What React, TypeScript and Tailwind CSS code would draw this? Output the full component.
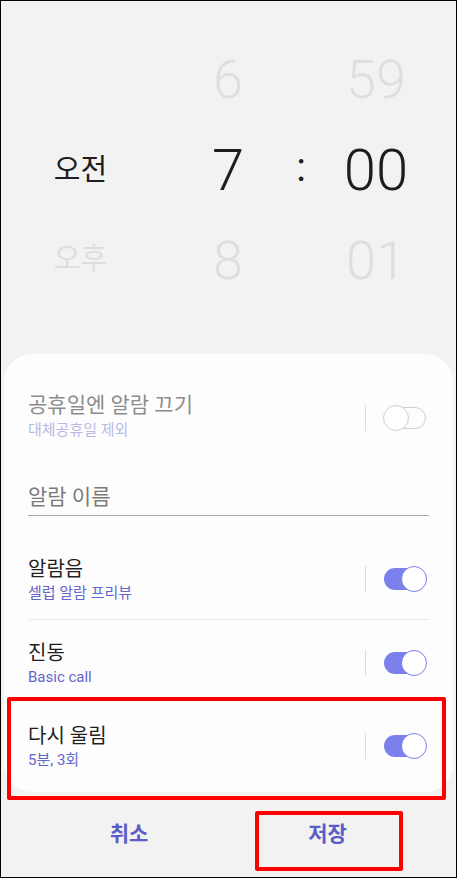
import React from 'react';

const font = { fontFamily: 'Roboto, "Noto Sans CJK KR", sans-serif' };

const Toggle: React.FC<{ on: boolean }> = ({ on }) => (
  <div className="flex items-center">
    <div className="w-px h-[26px] bg-[#dcdcdc] mr-[18px]" />
    {on ? (
      <div className="relative w-[42px] h-[22px] rounded-full bg-[#7c80ec]">
        <div className="absolute right-[-1px] top-[-2px] w-[26px] h-[26px] rounded-full bg-white border-[1.5px] border-[#7c80ec]" />
      </div>
    ) : (
      <div className="relative w-[42px] h-[22px] rounded-full border-[1.5px] border-[#cfcfcf]">
        <div className="absolute left-[-2px] top-[-3.5px] w-[26px] h-[26px] rounded-full bg-white border-[1.5px] border-[#cfcfcf]" />
      </div>
    )}
  </div>
);

const Row: React.FC<{ title: string; sub: string; on: boolean; divider?: boolean }> = ({ title, sub, on, divider }) => (
  <div className={`mx-[24px] h-[83px] flex items-center justify-between ${divider ? 'border-b border-[#ebebeb]' : ''}`}>
    <div className="flex flex-col pt-[4px]">
      <span className="text-[20px] leading-[26px] text-[#1f1f1f]">{title}</span>
      <span className="text-[15px] leading-[22px] text-[#6466cc]">{sub}</span>
    </div>
    <div className="pr-[3px] pt-[2px]">
      <Toggle on={on} />
    </div>
  </div>
);

export default function App() {
  return (
    <div className="relative w-[457px] h-[878px] bg-[#f2f2f2] border border-black overflow-hidden" style={font}>
      {/* time picker */}
      <div className="flex pt-[32px] h-[353px]">
        <div className="w-[159px] flex flex-col items-center">
          <div className="h-[92px]" />
          <div className="h-[90px] flex items-center text-[29px] text-[#1d1d1d] pt-[2px]">오전</div>
          <div className="h-[90px] flex items-center text-[29px] text-[#dedede]">오후</div>
        </div>
        <div className="w-[136px] flex flex-col items-center font-light">
          <div className="h-[92px] flex items-center text-[54px] text-[#dedede]">6</div>
          <div className="h-[90px] flex items-center text-[58px] text-[#1d1d1d]">7</div>
          <div className="h-[90px] flex items-center text-[54px] text-[#dedede]">8</div>
        </div>
        <div className="w-[10px] flex flex-col items-center">
          <div className="h-[92px]" />
          <div className="h-[90px] flex items-center text-[40px] text-[#1d1d1d] font-normal pb-[4px]">:</div>
        </div>
        <div className="w-[140px] flex flex-col items-center font-light">
          <div className="h-[92px] flex items-center text-[54px] text-[#dedede]">59</div>
          <div className="h-[90px] flex items-center text-[58px] text-[#1d1d1d]">00</div>
          <div className="h-[90px] flex items-center text-[54px] text-[#dedede]">01</div>
        </div>
      </div>

      {/* settings card */}
      <div className="mx-[3px] h-[438px] bg-[#fdfdfd] rounded-[28px] pt-[24px]">
        <div className="mx-[24px] h-[76px] flex items-center justify-between">
          <div className="flex flex-col">
            <span className="text-[21px] leading-[28px] text-[#8c8c8c]">공휴일엔 알람 끄기</span>
            <span className="text-[15px] leading-[22px] text-[#b9b9e6]">대체공휴일 제외</span>
          </div>
          <div className="pr-[3px] pt-[4px]">
            <Toggle on={false} />
          </div>
        </div>
        <div className="mx-[24px] mt-[22px] h-[40px] flex items-end border-b border-[#a9a9a9]">
          <span className="text-[21px] leading-[28px] text-[#7a7a7a] pb-[4px]">알람 이름</span>
        </div>
        <div className="h-[21px]" />
        <Row title="알람음" sub="셀럽 알람 프리뷰" on divider />
        <Row title="진동" sub="Basic call" on />
        <Row title="다시 울림" sub="5분, 3회" on />
      </div>

      {/* bottom buttons */}
      <div className="flex h-[85px]">
        <div className="w-[256px] flex items-center justify-center text-[21px] font-bold text-[#5b5dc6]">취소</div>
        <div className="flex-1 flex items-center justify-center pr-[58px] text-[21px] font-bold text-[#5b5dc6]">저장</div>
      </div>

      {/* highlight boxes */}
      <div className="absolute left-[6px] top-[696px] w-[439px] h-[103px] border-[4px] border-[#ff0000] rounded-[2px]" />
      <div className="absolute left-[254px] top-[810px] w-[148px] h-[60px] border-[4px] border-[#ff0000] rounded-[2px]" />
    </div>
  );
}
